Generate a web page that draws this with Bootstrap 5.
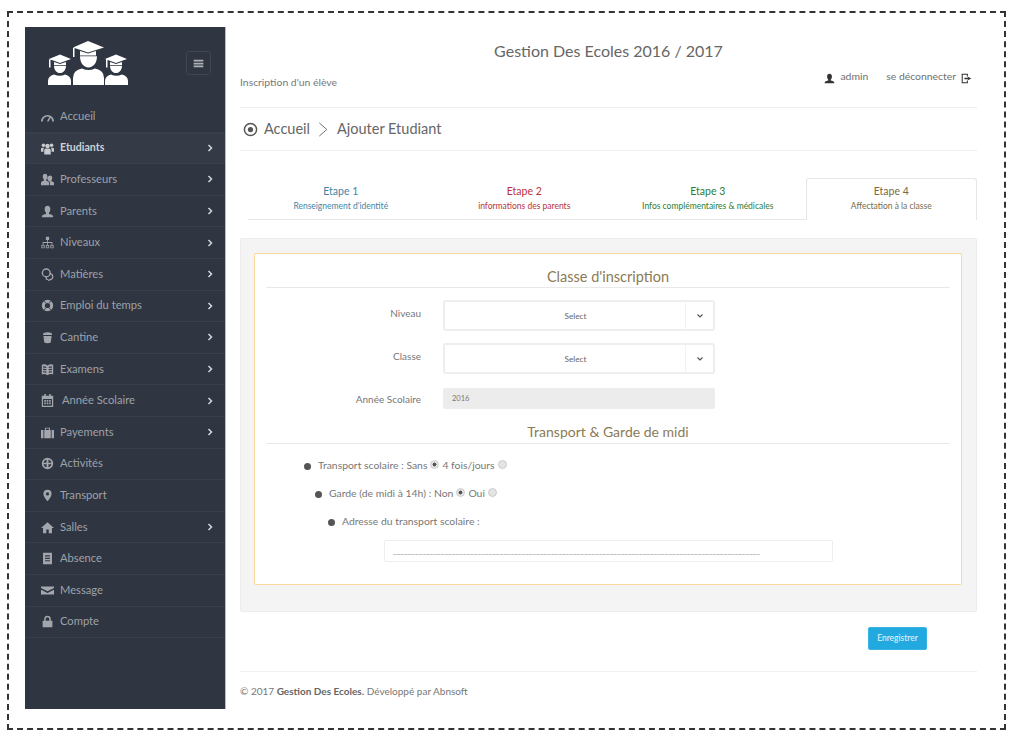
<!DOCTYPE html>
<html lang="fr">
<head>
  <meta charset="UTF-8">
  <meta name="viewport" content="width=device-width, initial-scale=1.0">
  <title>Gestion Des Ecoles</title>
  <link rel="stylesheet" href="https://cdn.jsdelivr.net/npm/bootstrap@5.3.0/dist/css/bootstrap.min.css">
  <style>
    body { font-family: "Lato", "Open Sans", sans-serif; color: #777; background: #fff; overflow: hidden; }
    .cadre { margin: 11px 9px 8px 7px; height: 719px; border: 2px dashed #333; padding: 14px 27px 0 16px; display: flex; }

    /* menu gauche */
    .menu-gauche { width: 201px; height: 682px; flex: none; background: #2f3541; border-right: 1px solid #b9bcc2; }
    .menu-haut { height: 74px; padding: 14px 14px 0 23px; }
    .logo-ecole { width: 80px; height: 44px; display: block; fill: #fff; }
    .btn-replier { width: 25px; height: 24px; margin-top: 10px; padding: 0; border: 1px solid #3f4654; border-radius: 3px; background: transparent; color: #aeb2b8; line-height: 1; }
    .btn-replier svg { width: 11px; height: 11px; fill: currentColor; display: block; margin: auto; }
    .menu-ligne { height: 31.6px; padding: 0 11px 0 16px; gap: 6px; font-size: 11.2px; color: #9ea2a9; border-bottom: 1px solid #383f4c; text-decoration: none; }
    .menu-ligne svg.ico { width: 13px; height: 13px; fill: #a3a6ac; flex: none; }
    .menu-ligne svg.fleche { width: 8px; height: 8px; fill: none; stroke: #d5d7da; stroke-width: 3; margin-left: auto; }
    .menu-ligne.actif { background: #343b47; color: #cfd2d6; font-weight: 700; font-size: 10.6px; border-top: 1px solid #383f4c; }
    .menu-ligne.actif svg.ico { fill: #c8cacd; }
    .menu-ligne.decale { gap: 8px; }

    /* contenu */
    .zone { flex: 1; margin-left: 14px; min-width: 0; }
    .titre-site { font-size: 16px; color: #666; text-align: center; line-height: 24px; margin: 12px 0 0; font-weight: 400; }
    .sous-tete { height: 45px; font-size: 10.4px; border-bottom: 1px solid #eee; padding-right: 5px; }
    .sous-tete .insc { margin-top: 12px; }
    .sous-tete .compte { margin-top: 6px; gap: 5px; color: #6f6f6f; }
    .sous-tete .nom { margin-right: 13px; }
    .sous-tete svg { width: 11px; height: 11px; fill: #333; }
    .ariane { height: 43px; font-size: 14.5px; color: #666; border-bottom: 1px solid #eee; padding-left: 3px; gap: 6px; }
    .ariane svg { flex: none; }
    .rond-ariane { width: 15px; height: 15px; }
    .chevron-ariane { width: 13px; height: 15px; margin: 0 1px; fill: none; stroke: #666; stroke-width: 1; }

    /* etapes */
    .etapes { margin: 27px 0 0 8px; padding-left: 7px; gap: 12px; border-bottom: 1px solid #e6e6e6; height: 42px; }
    .etape { flex: 1; text-align: center; padding-top: 5px; margin-bottom: -1px; font-size: 8.5px; line-height: 14px; border: 1px solid transparent; border-bottom: 0; }
    .etape b { display: block; font-weight: 400; font-size: 10.5px; margin-bottom: 1px; }
    .etape.active-etape { background: #fff; border-color: #e6e6e6; border-radius: 3px 3px 0 0; height: 42px; }
    .et-bleu { color: #3f86a6; }
    .et-rouge { color: #b8323c; }
    .et-vert { color: #2e7d32; }
    .et-brun { color: #7b6a45; }

    /* formulaire */
    .bloc-gris { margin-top: 18px; background: #f4f4f4; border: 1px solid #ececec; border-radius: 2px; padding: 14px 14px 26px 13px; height: 374px; }
    .bloc-form { background: #fff; border: 1px solid #fad99a; border-radius: 2px; height: 332px; padding: 13px 11px 0; }
    .titre-bloc { font-size: 14.5px; line-height: 20px; color: #8a7a55; text-align: center; border-bottom: 1px solid #e8e8e8; margin: 0 0 12px; font-weight: 400; height: 21px; }
    .titre-transport { font-size: 14px; margin: 13px 0 8px; height: 22px; }
    .ligne-form { display: flex; margin-bottom: 12px; }
    .ligne-form.espace { margin-bottom: 14px; }
    .ligne-form label { width: 155px; margin-right: 22px; text-align: right; font-size: 10px; padding-top: 6px; color: #777; }
    .champ-select { width: 272px; height: 31px; }
    .champ-select .btn { font-size: 8.2px; border: 2px solid #eee; background: #fff; color: #666; border-radius: 3px; padding: 0; }
    .champ-select .choix { flex: 1; padding: 2px 0 0 20px; border-right: 0; }
    .champ-select .caret { width: 30px; border-left: 1px solid #f2f2f2; margin-left: 0; }
    .champ-select svg { width: 8px; height: 8px; fill: none; stroke: #555; stroke-width: 2.4; }
    .annee { width: 272px; height: 21px; border: 0; border-radius: 2px; font-size: 7.5px; padding: 0 9px; color: #777; }
    .annee:disabled { background: #ececec; }
    .liste-transport { list-style: none; margin: 0; padding: 0; font-size: 10.4px; color: #777; }
    .liste-transport li { display: flex; align-items: center; height: 28px; }
    .liste-transport li::before { content: ""; width: 7px; height: 7px; border-radius: 50%; background: #555; margin-right: 7px; }
    .niv-1 { margin-left: 38px; }
    .niv-2 { margin-left: 49px; }
    .niv-3 { margin-left: 62px; }
    .liste-transport .form-check-input { width: 9px; height: 9px; margin: -3px 3px 0 3px; background: #e4e4e4; border-color: #ccc; }
    .liste-transport .form-check-input:checked { background: radial-gradient(circle, #555 35%, #e4e4e4 45%); border-color: #ccc; }
    .adresse { width: 449px; height: 22px; margin: 4px 0 0 118px; border: 1px solid #eee; border-radius: 2px; padding: 0 8px; font-size: 8px; color: #888; }
    .pied-form { padding-right: 50px; margin-top: 15px; height: 45px; border-bottom: 1px solid #f0f0f0; }
    .btn-enreg { width: 59px; height: 23px; padding: 0; font-size: 8.5px; color: #e8f6fc; background: #22a9e0; border: 1px solid #37b3e4; border-radius: 2px; }
    .pied-page { font-size: 10px; margin-top: 12px; color: #777; }
    .pied-page strong { color: #666; }
  </style>
</head>
<body>
  <svg width="0" height="0" class="d-none">
    <defs>
      <symbol id="i-jauge" viewBox="0 0 16 16"><path d="M0 14a8 8 0 0 1 16 0h-2.200a5.800 5.800 0 0 0-2-4.400L9.500 14H7.300l3-5.500A5.800 5.800 0 0 0 2.200 14z"/></symbol>
      <symbol id="i-groupe" viewBox="0 0 16 16"><circle cx="8" cy="5" r="2.800"/><circle cx="3" cy="4" r="2.200"/><circle cx="13" cy="4" r="2.200"/><path d="M4 15.500V10q0-2 2-2h4q2 0 2 2v5.500zM0 12V8.500Q0 7 1.500 7H4L3 8.500V12zM16 12V8.500Q16 7 14.500 7H12l1 1.500V12z"/></symbol>
      <symbol id="i-profs" viewBox="0 0 16 16"><path d="M5 1c1.800 0 2.800 1.300 2.800 3.300S7 7.500 6.500 8v1.500c1.500.5 3.500 1 3.500 2.500v3H0v-3c0-1.500 2-2 3.500-2.500V8C3 7.500 2.200 6.300 2.200 4.300S3.200 1 5 1z"/><path d="M11.500 3c1.500 0 2.300 1.200 2.300 2.800s-.7 2.700-1.100 3.100v1.100c1.300.4 3.300.8 3.300 2.200V15h-5v-3c0-1-.8-2-2.300-2.700V9c-.4-.4-1-1.500-1-3.200C8.200 4.200 10 3 11.500 3z"/></symbol>
      <symbol id="i-user" viewBox="0 0 16 16"><path d="M8 1c2.200 0 3.500 1.500 3.500 4S10.500 9 9.800 9.500V11c2 .6 5.200 1 5.200 3v1H1v-1c0-2 3.200-2.400 5.200-3V9.500C5.500 9 4.500 7.500 4.500 5S5.800 1 8 1z"/></symbol>
      <symbol id="i-niveaux" viewBox="0 0 16 16"><path fill-rule="evenodd" d="M6 1h4v4H8.500v2.500H14V11h1.500v4h-4v-4H13V8.500H8.500V11H10v4H6v-4h1.500V8.500H3V11h1.500v4h-4v-4H2V7.500h5.500V5H6zM1.500 12v2h2v-2zm5.500 0v2h2v-2zm5.500 0v2h2v-2z"/></symbol>
      <symbol id="i-matieres" viewBox="0 0 16 16"><circle cx="6.500" cy="6" r="4.800" fill="none" stroke="#a3a6ac" stroke-width="1.700"/><path d="M11 7c2 .5 3.500 1.800 3.500 3.500 0 2-1 3.500-3 3.800L9 15.500M6.500 11v2.500l2.500 1" fill="none" stroke="#a3a6ac" stroke-width="1.500"/></symbol>
      <symbol id="i-bouee" viewBox="0 0 16 16"><path fill-rule="evenodd" d="M8 1a7 7 0 1 1 0 14A7 7 0 0 1 8 1zm0 3.800a3.200 3.200 0 1 0 0 6.400 3.200 3.200 0 0 0 0-6.400zM3.300 2.800l2.300 2.300.5-.5-2.300-2.300zm9.400 0l-2.300 2.300-.5-.5 2.300-2.300zM3.300 13.200l2.300-2.300.5.5-2.300 2.300zm9.400 0l-2.300-2.300-.5.5 2.300 2.300z"/></symbol>
      <symbol id="i-gobelet" viewBox="0 0 16 16"><path d="M2.500 3q5.500-3 11 0v2h-11zM3 6h10l-1 8q-4 2-8 0z"/></symbol>
      <symbol id="i-livre" viewBox="0 0 16 16"><path fill-rule="evenodd" d="M1 2q4-1 7 1 3-2 7-1v12q-4-1-7 1-3-2-7-1zm1.500 2v1.500l4 .5V4.500zm0 3v1.500l4 .5V7.500zm0 3v1.500l4 .5v-1.500zm11-6l-4 .5V6l4-.5zm0 3l-4 .5V9l4-.5zm0 3l-4 .5V12l4-.5z"/></symbol>
      <symbol id="i-agenda" viewBox="0 0 16 16"><path fill-rule="evenodd" d="M4 0h2v2h4V0h2v2h3v14H1V2h3zM2.500 6v8.500h11V6zM4 7.500h2v2H4zm3 0h2v2H7zm3 0h2v2h-2zm-6 3h2v2H4zm3 0h2v2H7zm3 0h2v2h-2z"/></symbol>
      <symbol id="i-valise" viewBox="0 0 16 16"><path d="M5 2h6v3H9.800V3.200H6.200V5H5zM0 5h3v10H0zM4 5h8v10H4zM13 5h3v10h-3z"/></symbol>
      <symbol id="i-globe" viewBox="0 0 16 16"><path fill-rule="evenodd" d="M8 1a7 7 0 1 1 0 14A7 7 0 0 1 8 1zM6.800 3a5 5 0 0 0-3.700 4.200h3.700zm2.400 0v4.200h3.700A5 5 0 0 0 9.200 3zM3.100 8.800A5 5 0 0 0 6.800 13V8.800zm6.100 0V13a5 5 0 0 0 3.700-4.200z"/></symbol>
      <symbol id="i-repere" viewBox="0 0 16 16"><path fill-rule="evenodd" d="M8 1a5 5 0 0 1 5 5c0 3-3 6.500-5 9-2-2.500-5-6-5-9a5 5 0 0 1 5-5zm0 3a2 2 0 1 0 0 4 2 2 0 0 0 0-4z"/></symbol>
      <symbol id="i-maison" viewBox="0 0 16 16"><path d="M8 1.500L16 8.500h-2.500V15H9.500V10.500h-3V15H2.500V8.500H0z"/></symbol>
      <symbol id="i-doc" viewBox="0 0 16 16"><path fill-rule="evenodd" d="M2.500 1h11v14h-11zM5 4v1.500h6V4zm0 3v1.500h6V7zm0 3v1.500h6V10z"/></symbol>
      <symbol id="i-lettre" viewBox="0 0 16 16"><path d="M0 3h16v2L8 9 0 5zM0 7l8 4 8-4v6H0z"/></symbol>
      <symbol id="i-cadenas" viewBox="0 0 16 16"><path fill-rule="evenodd" d="M8 1a4 4 0 0 1 4 4v2h2v8H2V7h2V5a4 4 0 0 1 4-4zm0 1.800A2.200 2.200 0 0 0 5.800 5v2h4.400V5A2.200 2.200 0 0 0 8 2.800z"/></symbol>
      <symbol id="i-sortie" viewBox="0 0 16 16"><path d="M1 1h9v4H8.500V2.500h-6v11h6V11H10v4H1zM10 5.500l5 2.500-5 2.500V9H5V7h5z"/></symbol>
    </defs>
  </svg>

  <div class="cadre">
    <nav class="menu-gauche">
      <div class="menu-haut d-flex justify-content-between align-items-start">
        <svg class="logo-ecole" viewBox="0 0 80 44">
          <path d="M25 6.500L40 0l16 6.500-16 5zM25 7h1.500v9H25z"/>
          <path d="M32 10l8 2.500 8-2.500v4.500H32zM32 15.300h17c0 6.500-3.500 11.200-8.500 11.200S32 21.800 32 15.300zM25 44v-7q0-8 9-9.500 6.500 3 13 0 9 1.500 9 9.500v7z"/>
          <path d="M1 18l11-4.500L23 18l-11 4zM1 18.500h1.500v8H1zM6 21l6 2 6-2v3H6zM6 24.700h12c0 4-2.500 7.300-6 7.300s-6-3.300-6-7.300zM0 44v-4q0-5 6-6.500 6 2.500 11 0 6 1.500 6 6.500v4z"/>
          <path d="M57 18l11-4.500L79 18l-11 4zM58 18.500h1.500v8H58zM62 21l6 2 6-2v3H62zM62 24.700h12c0 4-2.500 7.300-6 7.300s-6-3.300-6-7.300zM57 44v-4q0-5 6-6.500 5 2.500 11 0 6 1.500 6 6.500v4z"/>
        </svg>
        <button class="btn-replier" type="button"><svg viewBox="0 0 16 16"><path d="M1 2.500h14v2.500H1zM1 6.800h14v2.500H1zM1 11h14v2.500H1z"/></svg></button>
      </div>
      <a class="menu-ligne d-flex align-items-center" href="#"><svg class="ico"><use href="#i-jauge"/></svg>Accueil</a>
      <a class="menu-ligne actif d-flex align-items-center" href="#"><svg class="ico"><use href="#i-groupe"/></svg>Etudiants<svg class="fleche" viewBox="0 0 16 16"><path d="M5 2l6 6-6 6"/></svg></a>
      <a class="menu-ligne d-flex align-items-center" href="#"><svg class="ico"><use href="#i-profs"/></svg>Professeurs<svg class="fleche" viewBox="0 0 16 16"><path d="M5 2l6 6-6 6"/></svg></a>
      <a class="menu-ligne d-flex align-items-center" href="#"><svg class="ico"><use href="#i-user"/></svg>Parents<svg class="fleche" viewBox="0 0 16 16"><path d="M5 2l6 6-6 6"/></svg></a>
      <a class="menu-ligne d-flex align-items-center" href="#"><svg class="ico"><use href="#i-niveaux"/></svg>Niveaux<svg class="fleche" viewBox="0 0 16 16"><path d="M5 2l6 6-6 6"/></svg></a>
      <a class="menu-ligne d-flex align-items-center" href="#"><svg class="ico"><use href="#i-matieres"/></svg>Matières<svg class="fleche" viewBox="0 0 16 16"><path d="M5 2l6 6-6 6"/></svg></a>
      <a class="menu-ligne d-flex align-items-center" href="#"><svg class="ico"><use href="#i-bouee"/></svg>Emploi du temps<svg class="fleche" viewBox="0 0 16 16"><path d="M5 2l6 6-6 6"/></svg></a>
      <a class="menu-ligne d-flex align-items-center" href="#"><svg class="ico"><use href="#i-gobelet"/></svg>Cantine<svg class="fleche" viewBox="0 0 16 16"><path d="M5 2l6 6-6 6"/></svg></a>
      <a class="menu-ligne d-flex align-items-center" href="#"><svg class="ico"><use href="#i-livre"/></svg>Examens<svg class="fleche" viewBox="0 0 16 16"><path d="M5 2l6 6-6 6"/></svg></a>
      <a class="menu-ligne decale d-flex align-items-center" href="#"><svg class="ico"><use href="#i-agenda"/></svg>Année Scolaire<svg class="fleche" viewBox="0 0 16 16"><path d="M5 2l6 6-6 6"/></svg></a>
      <a class="menu-ligne d-flex align-items-center" href="#"><svg class="ico"><use href="#i-valise"/></svg>Payements<svg class="fleche" viewBox="0 0 16 16"><path d="M5 2l6 6-6 6"/></svg></a>
      <a class="menu-ligne d-flex align-items-center" href="#"><svg class="ico"><use href="#i-globe"/></svg>Activités</a>
      <a class="menu-ligne d-flex align-items-center" href="#"><svg class="ico"><use href="#i-repere"/></svg>Transport</a>
      <a class="menu-ligne d-flex align-items-center" href="#"><svg class="ico"><use href="#i-maison"/></svg>Salles<svg class="fleche" viewBox="0 0 16 16"><path d="M5 2l6 6-6 6"/></svg></a>
      <a class="menu-ligne d-flex align-items-center" href="#"><svg class="ico"><use href="#i-doc"/></svg>Absence</a>
      <a class="menu-ligne d-flex align-items-center" href="#"><svg class="ico"><use href="#i-lettre"/></svg>Message</a>
      <a class="menu-ligne d-flex align-items-center" href="#"><svg class="ico"><use href="#i-cadenas"/></svg>Compte</a>
    </nav>

    <main class="zone">
      <h1 class="titre-site">Gestion Des Ecoles 2016 / 2017</h1>
      <div class="sous-tete d-flex justify-content-between">
        <div class="insc">Inscription d'un élève</div>
        <div class="compte d-flex align-items-start">
          <svg class="mt-1"><use href="#i-user"/></svg><span class="nom">admin</span>
          <span>se déconnecter</span><svg class="mt-1"><use href="#i-sortie"/></svg>
        </div>
      </div>
      <div class="ariane d-flex align-items-center">
        <svg class="rond-ariane" viewBox="0 0 16 16"><circle cx="8" cy="8" r="6.500" fill="none" stroke="#555" stroke-width="1.600"/><circle cx="8" cy="8" r="2.800" fill="#555"/></svg>
        <span>Accueil</span>
        <svg class="chevron-ariane" viewBox="0 0 13 16"><path d="M2 1l8 7-8 7"/></svg>
        <span>Ajouter Etudiant</span>
      </div>

      <div class="etapes d-flex">
        <div class="etape et-bleu"><b>Etape 1</b>Renseignement d'identité</div>
        <div class="etape et-rouge"><b>Etape 2</b>informations des parents</div>
        <div class="etape et-vert"><b>Etape 3</b>Infos complémentaires &amp; médicales</div>
        <div class="etape et-brun active-etape"><b>Etape 4</b>Affectation à la classe</div>
      </div>

      <div class="bloc-gris">
        <form class="bloc-form">
          <h2 class="titre-bloc">Classe d'inscription</h2>
          <div class="ligne-form">
            <label>Niveau</label>
            <div class="input-group champ-select">
              <button class="btn choix" type="button">Select</button>
              <button class="btn caret" type="button"><svg viewBox="0 0 16 16"><path d="M3 5l5 5 5-5"/></svg></button>
            </div>
          </div>
          <div class="ligne-form espace">
            <label>Classe</label>
            <div class="input-group champ-select">
              <button class="btn choix" type="button">Select</button>
              <button class="btn caret" type="button"><svg viewBox="0 0 16 16"><path d="M3 5l5 5 5-5"/></svg></button>
            </div>
          </div>
          <div class="ligne-form mb-0">
            <label class="pt-1">Année Scolaire</label>
            <input class="annee" type="text" value="2016" disabled>
          </div>
          <h2 class="titre-bloc titre-transport">Transport &amp; Garde de midi</h2>
          <ul class="liste-transport">
            <li class="niv-1">Transport scolaire : Sans <input class="form-check-input" type="radio" name="transport" checked> 4 fois/jours <input class="form-check-input" type="radio" name="transport"></li>
            <li class="niv-2">Garde (de midi à 14h) : Non <input class="form-check-input" type="radio" name="garde" checked> Oui <input class="form-check-input" type="radio" name="garde"></li>
            <li class="niv-3">Adresse du transport scolaire :</li>
          </ul>
          <input class="adresse d-block" type="text" value="____________________________________________________________________________________________________">
        </form>
      </div>

      <div class="pied-form d-flex justify-content-end">
        <button class="btn btn-enreg" type="button">Enregistrer</button>
      </div>
      <footer class="pied-page">© 2017 <strong>Gestion Des Ecoles.</strong> Développé par Abnsoft</footer>
    </main>
  </div>
</body>
</html>
